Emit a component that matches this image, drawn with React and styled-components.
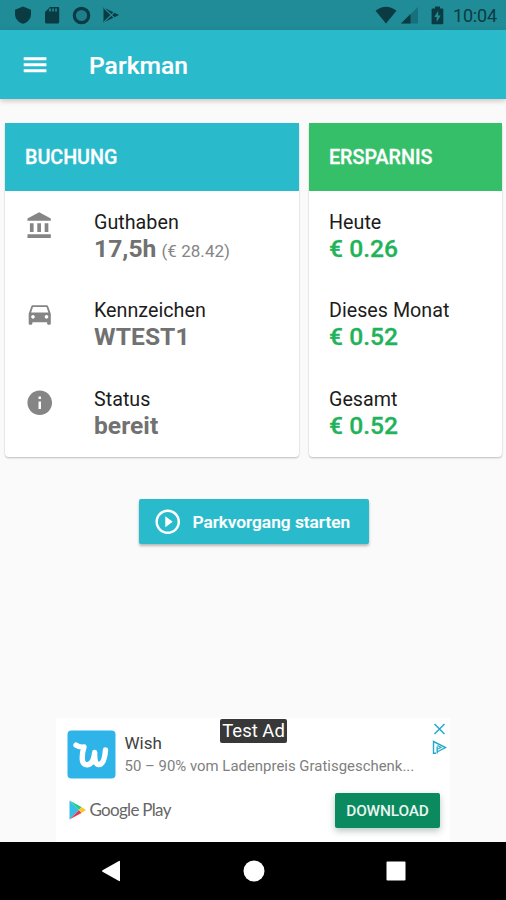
// App.jsx

import React from "react"
import styled, { createGlobalStyle } from "styled-components"

const GlobalStyle = createGlobalStyle`
  * {
    box-sizing: border-box;
  }

  body {
    margin: 0;
    background: #fafafa;
    font-family: Roboto, "Liberation Sans", sans-serif;
  }
`

const Screen = styled.div`
  display: flex;
  flex-direction: column;
  width: 506px;
  height: 900px;
  overflow: hidden;
  background: #fafafa;
`

const StatusBar = styled.div`
  display: flex;
  justify-content: space-between;
  flex: none;
  height: 30px;
  padding: 0 9px 0 14px;
  background: #1f8c98;
  color: #0b3b42;
`

const StatusIcons = styled.div`
  display: flex;
  align-items: center;
  gap: ${props => props.gap}px;

  svg {
    display: block;
  }
`

const Clock = styled.span`
  margin-left: 3px;
  padding-top: 2px;
  font-size: 18px;
  line-height: 30px;
  letter-spacing: -0.15px;
`

const AppBar = styled.header`
  display: flex;
  align-items: center;
  flex: none;
  height: 69px;
  padding-left: 20px;
  background: #29bacc;
  color: white;
  box-shadow: 0 2px 5px rgba(90, 40, 40, 0.25);
`

const Title = styled.h1`
  margin: 1px 0 0 39.5px;
  font-size: 24.6px;
  font-weight: 500;
  letter-spacing: 0.05px;
  -webkit-text-stroke: 0.2px white;
`

const Cards = styled.main`
  display: grid;
  grid-template-columns: 294px 192.5px;
  gap: 10px;
  padding: 23.5px 4px 0 5.4px;
`

const Card = styled.section`
  height: 334.5px;
  border-radius: 4px;
  background: white;
  box-shadow: 0 1px 2px rgba(0, 0, 0, 0.25);
`

const CardHeader = styled.h2`
  margin: 0;
  padding-left: 19.6px;
  background: ${props => props.color};
  color: white;
  font-size: 19.7px;
  font-weight: 500;
  line-height: 69px;
  height: 68px;
  -webkit-text-stroke: 0.3px white;
`

const Row = styled.div`
  display: flex;
  height: 88.5px;
  padding: 20.4px 0 0 19.6px;

  svg {
    flex: none;
    margin-right: 39.5px;
  }
`

const Label = styled.div`
  color: #1c1c1c;
  font-size: 19.7px;
  line-height: 24px;
  letter-spacing: 0.02px;
  white-space: nowrap;
`

const Value = styled.div`
  color: ${props => props.color || "#717171"};
  font-size: 24.6px;
  font-weight: ${props => (props.color ? 500 : 700)};
  line-height: 27px;
  letter-spacing: 0.05px;
  white-space: nowrap;
  -webkit-text-stroke: ${props => (props.color ? "0.3px" : "0")} currentColor;
`

const Note = styled.span`
  margin-left: 5px;
  color: #858585;
  font-size: 17px;
  font-weight: 400;
`

const StartButton = styled.button`
  display: flex;
  align-items: center;
  align-self: center;
  flex: none;
  width: 230px;
  height: 45px;
  margin: 42px 0 0 1px;
  padding: 0 0 0 14px;
  border: 0;
  border-radius: 2px;
  background: #29bacc;
  box-shadow: 0 2px 3px rgba(0, 0, 0, 0.28);
  color: white;
  font: 500 17.3px Roboto, sans-serif;

  span {
    margin-left: 10.5px;
    white-space: nowrap;
    -webkit-text-stroke: 0.2px white;
  }
`

const Ad = styled.aside`
  position: relative;
  align-self: center;
  width: 394px;
  height: 124px;
  margin-top: auto;
  padding: 12px 10px 0 10.5px;
  background: white;
`

const AdTop = styled.div`
  display: flex;

  svg {
    flex: none;
  }
`

const AdText = styled.div`
  margin-left: 9px;
  color: #808080;
  font-size: 14.9px;
  line-height: 23px;
  letter-spacing: 0.02px;
  white-space: nowrap;
`

const AdName = styled.div`
  padding-top: 2px;
  color: #404040;
  font-size: 17px;
`

const AdBottom = styled.div`
  display: flex;
  justify-content: space-between;
  margin-top: 14px;
`

const Store = styled.div`
  display: flex;
  align-items: center;
  height: 33px;
  color: #666;
  font-family: Lato, sans-serif;
  font-size: 17px;
  letter-spacing: -0.7px;

  svg {
    margin: 0 4px 0 2px;
  }
`

const Download = styled.button`
  width: 105px;
  height: 35px;
  padding: 0;
  border: 0;
  border-radius: 2px;
  background: #0b8a5f;
  box-shadow: 0 3px 7px rgba(20, 70, 60, 0.3);
  color: #e9f5f0;
  font: 500 15.4px Roboto, sans-serif;
  letter-spacing: -0.15px;
`

const TestBadge = styled.div`
  position: absolute;
  top: 1px;
  left: 164px;
  width: 67px;
  height: 24px;
  border-radius: 2px;
  background: #383838;
  color: white;
  font-size: 18.5px;
  line-height: 25px;
  text-align: center;
  white-space: nowrap;
`

const AdControls = styled.div`
  position: absolute;
  top: 4px;
  right: 3px;
  display: grid;
  gap: 4px;
`

const NavBar = styled.nav`
  display: flex;
  align-items: center;
  justify-content: space-between;
  flex: none;
  height: 58px;
  padding: 0 100px 0 101px;
  background: black;
`

const Icon = ({ d, size = 29.5, ...rest }) => (
  <svg width={size} height={size} viewBox="0 0 24 24" fill="currentColor" {...rest}>
    <path d={d} />
  </svg>
)

const icons = {
  menu: "M3 18.2h18.5v-2.5H3v2.5zm0-4.9h18.5v-2.5H3v2.5zM3 5.9v2.5h18.5V5.9H3z",
  bank: "M4 10v7h3v-7H4zm6 0v7h3v-7h-3zM2 22h19v-3H2v3zm14-12v7h3v-7h-3zm-4.5-9L2 6v2h19V6l-9.5-5z",
  car: "M18.92 6.01C18.72 5.42 18.16 5 17.5 5h-11c-.66 0-1.21.42-1.42 1.01L3 12v8c0 .55.45 1 1 1h1c.55 0 1-.45 1-1v-1h12v1c0 .55.45 1 1 1h1c.55 0 1-.45 1-1v-8l-2.08-5.99zM6.5 16c-.83 0-1.5-.67-1.5-1.5S5.67 13 6.5 13s1.5.67 1.5 1.5S7.33 16 6.5 16zm11 0c-.83 0-1.5-.67-1.5-1.5s.67-1.5 1.5-1.5 1.5.67 1.5 1.5-.67 1.5-1.5 1.5zM5 11l1.5-4.5h11L19 11H5z",
  info: "M12 2C6.48 2 2 6.48 2 12s4.48 10 10 10 10-4.48 10-10S17.52 2 12 2zm1 15h-2v-6h2v6zm0-8h-2V7h2v2z",
  play: "M10 16.5l6-4.5-6-4.5v9zM12 2C6.48 2 2 6.48 2 12s4.48 10 10 10 10-4.48 10-10S17.52 2 12 2zm0 18c-4.41 0-8-3.59-8-8s3.59-8 8-8 8 3.59 8 8-3.59 8-8 8z",
}

const bookings = [
  { icon: "bank", label: "Guthaben", value: "17,5h", note: "(€ 28.42)" },
  { icon: "car", label: "Kennzeichen", value: "WTEST1" },
  { icon: "info", label: "Status", value: "bereit" },
]

const savings = [
  { label: "Heute", value: "€ 0.26" },
  { label: "Dieses Monat", value: "€ 0.52" },
  { label: "Gesamt", value: "€ 0.52" },
]

const App = () => {
  return (
    <Screen>
      <GlobalStyle />
      <StatusBar>
        <StatusIcons gap={11}>
          <svg width="18" height="18" viewBox="0 0 18 18" fill="currentColor">
            <path d="M9 .5L17 3.7V8c0 5-3.5 8.4-8 9.8C4.5 16.4 1 13 1 8V3.7z" />
          </svg>
          <svg width="18" height="18" viewBox="0 0 18 18">
            <path d="M7 1h8.2q1 0 1 1v14q0 1.5-1.5 1.5H3.5Q2 17.5 2 16V6z" fill="currentColor" />
            <path d="M7 2.5v3M10 2.5v3M13 2.5v3" stroke="#1f8c98" strokeWidth="1.7" />
          </svg>
          <svg width="19" height="19" viewBox="0 0 19 19">
            <circle cx="9.5" cy="9.5" r="7.2" fill="#1c7f8b" stroke="currentColor" strokeWidth="3.2" />
          </svg>
          <svg width="18" height="18" viewBox="0 0 18 18">
            <path d="M1.5 1.5L17 9 1.5 16.5z" fill="currentColor" />
            <path d="M2 2l11 10.5M2 16L13 5.5" stroke="#1f8c98" strokeWidth="1.1" />
          </svg>
        </StatusIcons>
        <StatusIcons gap={4}>
          <svg width="22" height="18" viewBox="0 0 22 18" fill="currentColor">
            <path d="M.5 4.8Q11-3.5 21.5 4.8L11 17.5z" />
          </svg>
          <svg width="17" height="17" viewBox="0 0 17 17">
            <path d="M0 16.5L17 0v16.5z" fill="#17707c" />
            <path d="M0 16.5L9.5 7v9.5z" fill="currentColor" />
          </svg>
          <svg width="24" height="19" viewBox="0 0 24 19">
            <path d="M10 2.5h3V.5h5v2h2.5q.8 0 .8.8v14.2q0 .8-.8.8H10.4q-.8 0-.8-.8V3.3q0-.8.8-.8z" fill="currentColor" />
            <path d="M16.2 4.8l-4 6.200h2.500v5l4-6.500h-2.500z" fill="#1f8c98" />
          </svg>
          <Clock>10:04</Clock>
        </StatusIcons>
      </StatusBar>

      <AppBar>
        <Icon d={icons.menu} />
        <Title>Parkman</Title>
      </AppBar>

      <Cards>
        <Card>
          <CardHeader color="#29bacc">BUCHUNG</CardHeader>
          {bookings.map(item => (
            <Row key={item.label}>
              <Icon d={icons[item.icon]} color="#858585" />
              <div>
                <Label>{item.label}</Label>
                <Value>
                  {item.value}
                  {item.note && <Note>{item.note}</Note>}
                </Value>
              </div>
            </Row>
          ))}
        </Card>
        <Card>
          <CardHeader color="#35bf68">ERSPARNIS</CardHeader>
          {savings.map(item => (
            <Row key={item.label}>
              <div>
                <Label>{item.label}</Label>
                <Value color="#1fb35a">{item.value}</Value>
              </div>
            </Row>
          ))}
        </Card>
      </Cards>

      <StartButton>
        <Icon d={icons.play} />
        <span>Parkvorgang starten</span>
      </StartButton>

      <Ad>
        <AdTop>
          <svg width="49" height="49" viewBox="0 0 49 49">
            <rect x=".5" y=".5" width="48" height="48" rx="4" fill="#2fb4ea" />
            <path
              d="M9 15.2q3 2.3 8 1.800-2 6-1.700 12 .3 6.200 5.200 5.800 6-.6 7.200-12.300-.5 11.500 3.800 12 5.800.4 7-14.500"
              fill="none"
              stroke="white"
              strokeWidth="5.4"
              strokeLinecap="round"
              strokeLinejoin="round"
            />
          </svg>
          <AdText>
            <AdName>Wish</AdName>
            50 – 90% vom Ladenpreis Gratisgeschenk...
          </AdText>
        </AdTop>
        <AdBottom>
          <Store>
            <svg width="17" height="20" viewBox="0 0 17 20">
              <path d="M.5.5v19L10 10z" fill="#35bfe8" />
              <path d="M.5.5L10 10l2.5-3z" fill="#20cf83" />
              <path d="M.5 19.5L10 10l2.5 3z" fill="#e63950" />
              <path d="M12.5 7L17 10l-4.5 3L10 10z" fill="#fbc52c" />
            </svg>
            Google Play
          </Store>
          <Download>DOWNLOAD</Download>
        </AdBottom>
        <TestBadge>Test Ad</TestBadge>
        <AdControls>
          <svg width="15" height="14" viewBox="0 0 15 14" stroke="#25a9cb" strokeWidth="1.5">
            <path d="M2.5 2l10 10M12.5 2l-10 10" />
          </svg>
          <svg width="15" height="15" viewBox="0 0 15 15" fill="none" stroke="#25a9cb" strokeWidth="1.4">
            <path d="M4 13.200H1.500V1.500L13.500 7.500 6 11.500M5.200 6.500v7" />
            <path d="M5.500 5.600l3.500 1.900-3 1.500" strokeWidth="1.100" />
          </svg>
        </AdControls>
      </Ad>

      <NavBar>
        <svg width="20" height="22" viewBox="0 0 20 22" fill="white">
          <path d="M18 1q1-.5 1 .5v19q0 1-1 .5L1.5 11.7q-1-.7 0-1.4z" />
        </svg>
        <svg width="22" height="22" viewBox="0 0 22 22" fill="white">
          <circle cx="11" cy="11" r="10.5" />
        </svg>
        <svg width="20" height="20" viewBox="0 0 20 20" fill="white">
          <rect x=".5" y=".5" width="19" height="19" rx="1" />
        </svg>
      </NavBar>
    </Screen>
  )
}

export default App
